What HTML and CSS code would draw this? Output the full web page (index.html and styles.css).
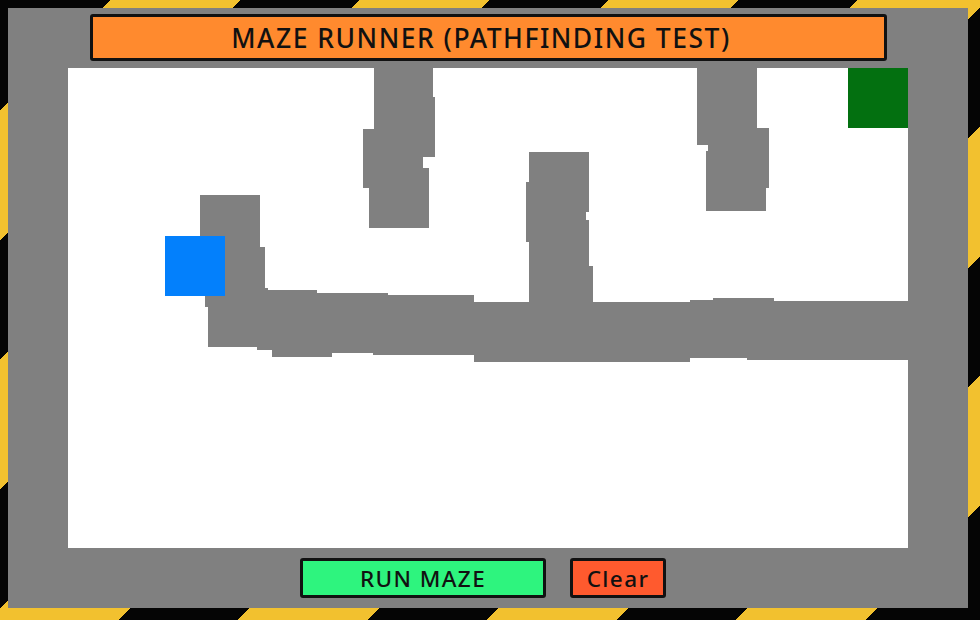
FILE: index.html
```html
<!DOCTYPE html>
<html>
<head>
<meta charset="utf-8">
<title>Maze Runner</title>
<link rel="stylesheet" href="styles.css">
</head>
<body>
<div class="panel">
  <div class="title">MAZE RUNNER (PATHFINDING TEST)</div>
  <svg class="maze" width="840" height="480" viewBox="68 68 840 480" xmlns="http://www.w3.org/2000/svg">
    <rect x="68" y="68" width="840" height="480" fill="#ffffff"/>
    <g fill="#808080">
      <!-- left column -->
      <rect x="200" y="195" width="60" height="60"/>
      <rect x="205" y="247" width="60" height="60"/>
      <!-- band -->
      <rect x="208" y="288" width="60" height="59"/>
      <rect x="257" y="290" width="60" height="60"/>
      <rect x="272" y="293" width="60" height="64"/>
      <rect x="317" y="293" width="71" height="60"/>
      <rect x="373" y="295" width="101" height="60"/>
      <rect x="474" y="302" width="61" height="60"/>
      <rect x="533" y="302" width="157" height="60"/>
      <rect x="690" y="300" width="57" height="58"/>
      <rect x="713" y="298" width="61" height="60"/>
      <rect x="747" y="301" width="161" height="59"/>
      <!-- column A -->
      <rect x="374" y="68" width="59" height="29"/>
      <rect x="374" y="97" width="61" height="60"/>
      <rect x="363" y="129" width="60" height="59"/>
      <rect x="369" y="168" width="60" height="60"/>
      <!-- column B -->
      <rect x="529" y="152" width="60" height="60"/>
      <rect x="526" y="182" width="60" height="60"/>
      <rect x="529" y="220" width="60" height="52"/>
      <rect x="529" y="242" width="4" height="60"/>
      <rect x="533" y="266" width="60" height="40"/>
      <!-- column C -->
      <rect x="697" y="68" width="60" height="77"/>
      <rect x="708" y="128" width="61" height="60"/>
      <rect x="706" y="151" width="60" height="60"/>
    </g>
    <rect x="848" y="68" width="60" height="60" fill="#037010"/>
    <rect x="165" y="236" width="60" height="60" fill="#0380fc"/>
  </svg>
  <div class="controls">
    <button class="btn btn-run">RUN MAZE</button>
    <button class="btn btn-clear">Clear</button>
  </div>
</div>
</body>
</html>
```
FILE: styles.css
```css
html {
  height: 100%;
  background: repeating-linear-gradient(135deg, #050505 0 78px, #f2c12f 78px 170px, #050505 170px 176.07px);
}
body {
  margin: 8px;
  font-family: "Noto Sans", "DejaVu Sans", sans-serif;
}
.panel {
  width: 960px;
  height: 600px;
  box-sizing: border-box;
  background: #808080;
  padding-top: 6px;
  display: flex;
  flex-direction: column;
  align-items: center;
}
.title {
  width: 797px;
  height: 47px;
  box-sizing: border-box;
  border: 3px solid #111;
  border-radius: 3px;
  background: #ff8a2e;
  color: #111;
  display: flex;
  align-items: center;
  justify-content: center;
  padding-right: 14px;
  font-size: 26.5px;
  font-weight: 500;
  letter-spacing: 1.5px;
}
.maze {
  display: block;
  margin-top: 7px;
}
.controls {
  margin-top: 10px;
  display: flex;
  gap: 24px;
  margin-right: 10px;
}
.btn {
  height: 40px;
  box-sizing: border-box;
  border: 3px solid #111;
  border-radius: 3px;
  color: #111;
  font-family: "Noto Sans", "DejaVu Sans", sans-serif;
  font-size: 22.5px;
  font-weight: 500;
  letter-spacing: 1.4px;
  padding: 0;
  display: flex;
  align-items: center;
  justify-content: center;
}
.btn-run {
  width: 246px;
  background: #2ef47e;
}
.btn-clear {
  width: 96px;
  background: #ff5a2e;
}
```
